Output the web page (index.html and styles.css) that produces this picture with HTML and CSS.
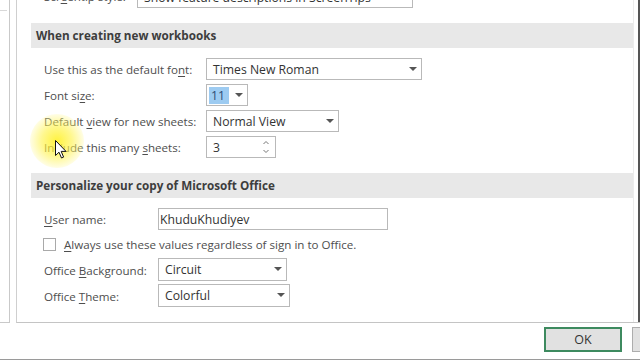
FILE: index.html
```html
<!DOCTYPE html>
<html>
<head>
<meta charset="utf-8">
<link rel="stylesheet" href="styles.css">
</head>
<body>
<div class="screen">
  <div class="main">
    <aside class="sidebar"><span class="tick"></span></aside>
    <div class="panel">
      <div class="content">
        <div class="toprow">
          <span class="label">Scr<u>e</u>entip style:</span>
          <div class="box tipbox">Show feature descriptions in ScreenTips</div>
        </div>
        <div class="band">When creating new workbooks</div>
        <div class="grid g1">
          <span class="label">Use this as the default fo<u>n</u>t:</span>
          <div class="box select w-font">Times New Roman<span class="arrow"></span></div>
          <span class="label">Font si<u>z</u>e:</span>
          <div class="box select w-size"><span class="sel">11</span><span class="arrow"></span></div>
          <span class="label">Default <u>v</u>iew for new sheets:</span>
          <div class="box select w-view">Normal View<span class="arrow"></span></div>
          <span class="label">Include this many <u>s</u>heets:</span>
          <div class="box w-spin">3
            <svg class="spin" width="8" height="16" viewBox="0 0 8 16"><path d="M1.5 5 L4 2.5 L6.5 5 M1.5 11 L4 13.5 L6.5 11" fill="none" stroke="#777" stroke-width="1"/></svg>
          </div>
        </div>
        <div class="band">Personalize your copy of Microsoft Office</div>
        <div class="grid g2">
          <span class="label"><u>U</u>ser name:</span>
          <div class="box w-user">KhuduKhudiyev</div>
          <div class="checkrow"><span class="check"></span><span class="label"><u>A</u>lways use these values regardless of sign in to Office.</span></div>
          <span class="label">Office <u>B</u>ackground:</span>
          <div class="box select w-bg">Circuit<span class="arrow"></span></div>
          <span class="label">Office <u>T</u>heme:</span>
          <div class="box select w-theme">Colorful<span class="arrow"></span></div>
        </div>
      </div>
      <div class="scroll"></div>
    </div>
  </div>
  <div class="footer">
    <button class="btn ok">OK</button>
    <button class="btn cancel">Cancel</button>
  </div>
  <div class="cursor">
    <div class="glow"></div>
    <svg class="arrowcur" width="12" height="19" viewBox="0 0 12 19"><path d="M0.5 0.5 L0.5 15.5 L4 12.2 L6.5 18 L8.6 17.1 L6.2 11.4 L11 11.4 Z" fill="#fff" stroke="#111" stroke-width="1"/></svg>
  </div>
</div>
</body>
</html>
```
FILE: styles.css
```css
html, body {
  margin: 0;
  padding: 0;
  background: #fff;
}
.screen {
  position: relative;
  width: 640px;
  height: 360px;
  overflow: hidden;
  background: #fff;
  font-family: "Open Sans", "Noto Sans", sans-serif;
  font-size: 11.6px;
  color: #505050;
}
.main {
  display: flex;
  height: 323px;
}
.sidebar {
  position: relative;
  width: 9px;
  height: 322px;
  border-right: 1px solid #c9c9c9;
  border-bottom: 1px solid #c9c9c9;
  flex: none;
}
.tick {
  position: absolute;
  left: 0;
  top: 10px;
  width: 7px;
  height: 1px;
  background: #d8d8d8;
}
.panel {
  margin-left: 6px;
  flex: 1;
  display: flex;
  border-left: 1px solid #cfcfcf;
  border-bottom: 1px solid #c4c4c4;
  height: 322px;
}
.content {
  width: 616px;
  border-right: 1px solid #ececec;
}
.scroll {
  flex: 1;
  border-right: 2px solid #555;
}
.toprow {
  margin-top: -14px;
  height: 22px;
  display: flex;
  padding-left: 27px;
}
.toprow .label {
  line-height: 22px;
  width: 93px;
}
.box {
  position: relative;
  box-sizing: border-box;
  height: 22px;
  border: 1px solid #b9b9b9;
  background: #fff;
  color: #333;
  font-size: 12.2px;
  line-height: 21px;
  padding-left: 6px;
  white-space: nowrap;
}
.tipbox {
  width: 276px;
}
.band {
  margin: 15px 0 0 14px;
  height: 25px;
  background: #e8e8e8;
  font-weight: 700;
  color: #3d3d3d;
  font-size: 11.7px;
  line-height: 25px;
  padding-left: 5px;
}
.grid {
  display: grid;
  margin-top: 10px;
  padding-left: 27px;
  align-items: center;
}
.g1 {
  grid-template-columns: 162px auto;
  grid-auto-rows: 22px;
  row-gap: 4px;
  justify-items: start;
}
.g2 {
  grid-template-columns: 114px auto;
  grid-template-rows: 22px 22px 23px 23px;
  row-gap: 3px;
  justify-items: start;
}
.g1 .label, .g2 > .label {
  padding-top: 1px;
}
.label {
  color: #4e4e4e;
  white-space: nowrap;
}
u {
  text-decoration-thickness: 1px;
  text-underline-offset: 2px;
}
.arrow {
  position: absolute;
  right: 4px;
  top: 8px;
  width: 0;
  height: 0;
  border-left: 4px solid transparent;
  border-right: 4px solid transparent;
  border-top: 4px solid #555;
}
.w-font { width: 216px; }
.w-size { width: 42px; padding-left: 2px; }
.w-view { width: 133px; }
.w-spin { width: 70px; }
.w-user { width: 230px; height: 22px; padding-left: 1px; }
.w-bg { width: 129px; height: 23px; line-height: 22px; }
.w-theme { width: 132px; height: 23px; line-height: 22px; }
.sel {
  display: inline-block;
  background: #9dcbf1;
  color: #2d4a72;
  padding: 0 4px 0 2px;
  line-height: 17px;
  margin-top: 2px;
  vertical-align: top;
}
.spin {
  position: absolute;
  right: 5px;
  top: 2px;
}
.checkrow {
  grid-column: 1 / span 2;
  display: flex;
  align-items: center;
  margin-left: -1px;
}
.check {
  box-sizing: border-box;
  width: 13px;
  height: 13px;
  border: 1px solid #a9a9a9;
  background: #fff;
  margin-right: 8px;
}
.footer {
  height: 37px;
  border-bottom: 1px solid #9a9a9a;
  display: flex;
  align-items: flex-start;
  padding-top: 4px;
  box-sizing: border-box;
  padding-left: 544px;
  gap: 10px;
}
.btn {
  box-sizing: border-box;
  height: 25px;
  font-family: "Open Sans", "Noto Sans", sans-serif;
  font-size: 12.5px;
  color: #333;
  background: #e1e1e1;
  flex: none;
}
.ok {
  width: 78px;
  border: 2px solid #3d8a5f;
}
.cancel {
  width: 78px;
  border: 1px solid #adadad;
}
.cursor {
  position: absolute;
  left: 30px;
  top: 114px;
  width: 54px;
  height: 54px;
  pointer-events: none;
}
.glow {
  position: absolute;
  inset: 0;
  border-radius: 50%;
  background: radial-gradient(circle, rgba(255,240,30,0.85) 0%, rgba(255,243,70,0.6) 40%, rgba(255,248,150,0.25) 70%, rgba(255,255,255,0) 100%);
}
.arrowcur {
  position: absolute;
  left: 25px;
  top: 26px;
}
```
